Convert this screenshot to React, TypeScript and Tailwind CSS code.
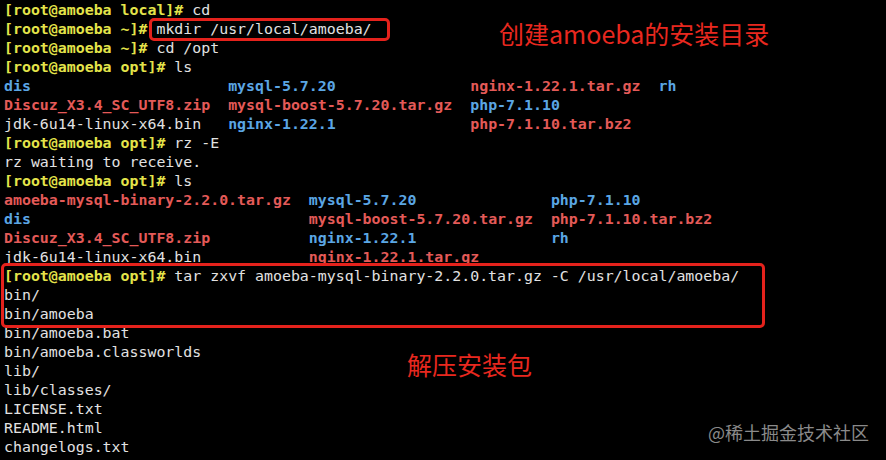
import React from "react";

const P = "font-bold text-[#e4e44a]";
const B = "font-bold text-[#5ba6e4]";
const R = "font-bold text-[#e45a58]";
const W = "text-[#e2e2e2]";

const sp = (n: number) => " ".repeat(n);

type Seg = [string, string];

const lines: Seg[][] = [
  [[P, "[root@amoeba local]#"], [W, " cd"]],
  [[P, "[root@amoeba ~]#"], [W, " mkdir /usr/local/amoeba/"]],
  [[P, "[root@amoeba ~]#"], [W, " cd /opt"]],
  [[P, "[root@amoeba opt]#"], [W, " ls"]],
  [[B, "dis"], [W, sp(22)], [B, "mysql-5.7.20"], [W, sp(15)], [R, "nginx-1.22.1.tar.gz"], [W, sp(2)], [B, "rh"]],
  [[R, "Discuz_X3.4_SC_UTF8.zip"], [W, sp(2)], [R, "mysql-boost-5.7.20.tar.gz"], [W, sp(2)], [B, "php-7.1.10"]],
  [[W, "jdk-6u14-linux-x64.bin" + sp(3)], [B, "nginx-1.22.1"], [W, sp(15)], [R, "php-7.1.10.tar.bz2"]],
  [[P, "[root@amoeba opt]#"], [W, " rz -E"]],
  [[W, "rz waiting to receive."]],
  [[P, "[root@amoeba opt]#"], [W, " ls"]],
  [[R, "amoeba-mysql-binary-2.2.0.tar.gz"], [W, sp(2)], [B, "mysql-5.7.20"], [W, sp(15)], [B, "php-7.1.10"]],
  [[B, "dis"], [W, sp(31)], [R, "mysql-boost-5.7.20.tar.gz"], [W, sp(2)], [R, "php-7.1.10.tar.bz2"]],
  [[R, "Discuz_X3.4_SC_UTF8.zip"], [W, sp(11)], [B, "nginx-1.22.1"], [W, sp(15)], [B, "rh"]],
  [[W, "jdk-6u14-linux-x64.bin" + sp(12)], [R, "nginx-1.22.1.tar.gz"]],
  [[P, "[root@amoeba opt]#"], [W, " tar zxvf amoeba-mysql-binary-2.2.0.tar.gz -C /usr/local/amoeba/"]],
  [[W, "bin/"]],
  [[W, "bin/amoeba"]],
  [[W, "bin/amoeba.bat"]],
  [[W, "bin/amoeba.classworlds"]],
  [[W, "lib/"]],
  [[W, "lib/classes/"]],
  [[W, "LICENSE.txt"]],
  [[W, "README.html"]],
  [[W, "changelogs.txt"]],
];

export default function App() {
  return (
    <div className="relative w-[886px] h-[460px] bg-black overflow-hidden">
      {/* terminal output */}
      <div className="pl-[4px] pt-[1px] font-['DejaVu_Sans_Mono',monospace] text-[14.9px] leading-[19px] whitespace-pre">
        {lines.map((line, i) => (
          <div key={i} className="h-[19px]">
            {line.map(([cls, text], j) => (
              <span key={j} className={cls}>{text}</span>
            ))}
          </div>
        ))}
      </div>

      {/* annotation boxes */}
      <div className="absolute left-[149px] top-[18px] w-[241px] h-[23px] border-[3px] border-[#e5221c] rounded-[5px]" />
      <div className="absolute left-[1px] top-[263px] w-[764px] h-[65px] border-[3px] border-[#e5221c] rounded-[5px]" />

      {/* annotation notes */}
      <div className="absolute left-[499px] top-[16px] text-[25px] leading-[34px] text-[#e8281f] font-['Noto_Sans_CJK_SC',sans-serif]">
        创建amoeba的安装目录
      </div>
      <div className="absolute left-[407px] top-[347px] text-[25px] leading-[34px] text-[#e8281f] font-['Noto_Sans_CJK_SC',sans-serif]">
        解压安装包
      </div>

      {/* watermark */}
      <div className="absolute left-[708px] top-[420px] text-[18px] leading-[24px] text-[#8a8a8a] font-['Noto_Sans_CJK_SC',sans-serif]">
        @稀土掘金技术社区
      </div>
    </div>
  );
}
